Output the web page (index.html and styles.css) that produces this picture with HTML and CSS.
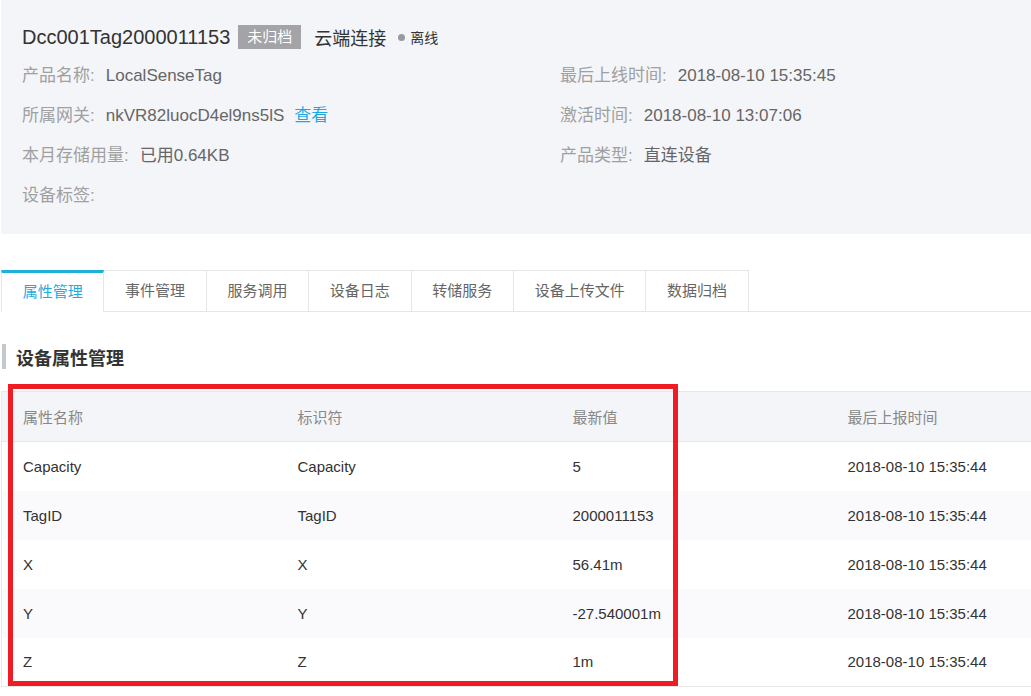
FILE: index.html
```html
<!DOCTYPE html>
<html>
<head>
<meta charset="utf-8">
<link rel="stylesheet" href="styles.css">
</head>
<body>
<div class="page">
  <div class="header">
    <div class="title-row">
      <span class="dev-name">Dcc001Tag2000011153</span>
      <span class="badge">未归档</span>
      <span class="conn">云端连接</span>
      <span class="status"><span class="dot"></span>离线</span>
    </div>
    <div class="info-grid">
      <div class="info"><span class="lbl">产品名称:</span><span class="val">LocalSenseTag</span></div>
      <div class="info"><span class="lbl">最后上线时间:</span><span class="val">2018-08-10 15:35:45</span></div>
      <div class="info"><span class="lbl">所属网关:</span><span class="val">nkVR82luocD4el9ns5lS</span><a class="link">查看</a></div>
      <div class="info"><span class="lbl">激活时间:</span><span class="val">2018-08-10 13:07:06</span></div>
      <div class="info"><span class="lbl">本月存储用量:</span><span class="val">已用0.64KB</span></div>
      <div class="info"><span class="lbl">产品类型:</span><span class="val">直连设备</span></div>
      <div class="info"><span class="lbl">设备标签:</span></div>
    </div>
  </div>

  <div class="tabs">
    <div class="tab active">属性管理</div>
    <div class="tab">事件管理</div>
    <div class="tab">服务调用</div>
    <div class="tab">设备日志</div>
    <div class="tab">转储服务</div>
    <div class="tab">设备上传文件</div>
    <div class="tab">数据归档</div>
  </div>

  <div class="section-title"><span class="bar"></span>设备属性管理</div>

  <div class="table-wrap">
    <table class="props">
      <thead>
        <tr><th>属性名称</th><th>标识符</th><th>最新值</th><th>最后上报时间</th></tr>
      </thead>
      <tbody>
        <tr><td>Capacity</td><td>Capacity</td><td>5</td><td>2018-08-10 15:35:44</td></tr>
        <tr class="stripe"><td>TagID</td><td>TagID</td><td>2000011153</td><td>2018-08-10 15:35:44</td></tr>
        <tr><td>X</td><td>X</td><td>56.41m</td><td>2018-08-10 15:35:44</td></tr>
        <tr class="stripe"><td>Y</td><td>Y</td><td>-27.540001m</td><td>2018-08-10 15:35:44</td></tr>
        <tr><td>Z</td><td>Z</td><td>1m</td><td>2018-08-10 15:35:44</td></tr>
      </tbody>
    </table>
    <div class="highlight"></div>
  </div>
</div>
</body>
</html>
```

FILE: styles.css
```css
html, body {
  margin: 0;
  padding: 0;
  background: #fff;
  overflow: hidden;
}
body {
  font-family: "Liberation Sans", "Noto Sans CJK SC", Arial, sans-serif;
  color: #333;
}
.page {
  padding-left: 1px;
  width: 1030px;
  overflow: hidden;
}
.header {
  background: #f4f5f9;
  height: 234px;
  box-sizing: border-box;
  padding: 18px 0 0 21px;
}
.title-row {
  display: flex;
  align-items: center;
  height: 38px;
}
.dev-name {
  font-size: 20px;
  color: #333;
}
.badge {
  margin-left: 8px;
  background: #a3a3a8;
  color: #fff;
  font-size: 15px;
  height: 24px;
  line-height: 24px;
  padding: 0 9px;
}
.conn {
  margin-left: 13px;
  font-size: 18px;
  color: #333;
}
.status {
  margin-left: 12px;
  font-size: 14px;
  color: #333;
  display: flex;
  align-items: center;
}
.dot {
  width: 7px;
  height: 7px;
  border-radius: 50%;
  background: #9a9a9e;
  margin-right: 5px;
}
.info-grid {
  display: grid;
  grid-template-columns: 538px 1fr;
}
.info {
  height: 40px;
  line-height: 40px;
  font-size: 17px;
  white-space: nowrap;
}
.lbl {
  color: #a0a0a0;
  margin-right: 11px;
}
.val {
  color: #666;
}
.link {
  color: #1eaadf;
  margin-left: 10px;
}
.tabs {
  margin-top: 36px;
  display: flex;
  height: 41px;
  border-bottom: 1px solid #e6e6e6;
  box-sizing: content-box;
}
.tab {
  box-sizing: border-box;
  height: 42px;
  padding: 0 20.7px;
  line-height: 40px;
  font-size: 15px;
  color: #666;
  border: 1px solid #e6e6e6;
  border-left: none;
  background: #fff;
  margin-bottom: -1px;
}
.tab:first-child {
  border-left: 1px solid #e6e6e6;
}
.tab.active {
  color: #1eaadf;
  border-top: 3px solid #1fb0d8;
  border-bottom-color: #fff;
  line-height: 38px;
}
.section-title {
  margin-top: 32px;
  display: flex;
  align-items: center;
  height: 25px;
  font-size: 18px;
  font-weight: bold;
  color: #333;
}
.bar {
  width: 4px;
  height: 25px;
  margin-left: 1px;
  margin-right: 10px;
  background: #c4c8cc;
}
.table-wrap {
  position: relative;
  margin-top: 22px;
}
.props {
  border-collapse: collapse;
  width: 1100px;
  border: 1px solid #e8e8e8;
  table-layout: fixed;
  font-size: 15px;
}
.props th, .props td {
  width: 275px;
  text-align: left;
  padding: 0 0 0 21px;
  box-sizing: border-box;
}
.props th {
  height: 50px;
  background: #f4f5f9;
  font-weight: normal;
  color: #888;
  border-bottom: 1px solid #e8e8e8;
}
.props td {
  height: 49px;
  color: #333;
}
.props tr.stripe td {
  background: #fafafc;
}
.highlight {
  position: absolute;
  left: 7px;
  top: -7px;
  width: 670px;
  height: 302px;
  box-sizing: border-box;
  border: 5px solid #ee1c25;
  pointer-events: none;
}
```
